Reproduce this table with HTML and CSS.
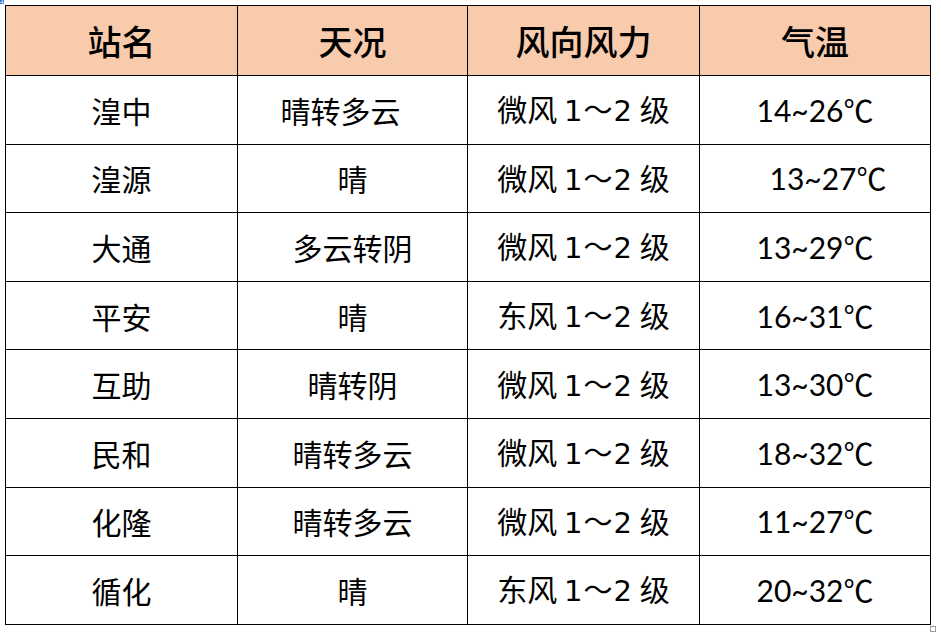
FILE: index.html
```html
<!DOCTYPE html>
<html lang="zh">
<head>
<meta charset="utf-8">
<title>天气预报</title>
<link rel="stylesheet" href="styles.css">
</head>
<body>
<div class="canvas">
  <span class="handle handle-tl"></span>
  <table class="weather">
    <colgroup><col class="c1"><col class="c2"><col class="c3"><col class="c4"></colgroup>
    <thead>
      <tr><th>站名</th><th>天况</th><th>风向风力</th><th>气温</th></tr>
    </thead>
    <tbody>
      <tr><td>湟中</td><td><span class="shift-l">晴转多云</span></td><td>微风 <span class="num">1～2</span> 级</td><td class="temp">14~26℃</td></tr>
      <tr><td>湟源</td><td>晴</td><td>微风 <span class="num">1～2</span> 级</td><td class="temp"><span class="shift-r">13~27℃</span></td></tr>
      <tr><td>大通</td><td>多云转阴</td><td>微风 <span class="num">1～2</span> 级</td><td class="temp">13~29℃</td></tr>
      <tr><td>平安</td><td>晴</td><td>东风 <span class="num">1～2</span> 级</td><td class="temp">16~31℃</td></tr>
      <tr><td>互助</td><td>晴转阴</td><td>微风 <span class="num">1～2</span> 级</td><td class="temp">13~30℃</td></tr>
      <tr><td>民和</td><td>晴转多云</td><td>微风 <span class="num">1～2</span> 级</td><td class="temp">18~32℃</td></tr>
      <tr><td>化隆</td><td>晴转多云</td><td>微风 <span class="num">1～2</span> 级</td><td class="temp">11~27℃</td></tr>
      <tr><td>循化</td><td>晴</td><td>东风 <span class="num">1～2</span> 级</td><td class="temp">20~32℃</td></tr>
    </tbody>
  </table>
  <span class="handle handle-br"></span>
</div>
</body>
</html>
```

FILE: styles.css
```css
html, body {
  margin: 0;
  padding: 0;
  background: #ffffff;
}

.canvas {
  position: relative;
  width: 941px;
  height: 632px;
  padding: 5px 0 0 5px;
  box-sizing: border-box;
}

.weather {
  border-collapse: collapse;
  table-layout: fixed;
  width: 925px;
  font-family: "Noto Sans CJK SC", "Noto Sans", sans-serif;
  color: #000;
}

.c1 { width: 232px; }
.c2 { width: 230px; }
.c3 { width: 232px; }
.c4 { width: 231px; }

.weather th,
.weather td {
  border: 1px solid #000;
  padding: 0;
  text-align: center;
  vertical-align: middle;
}

.weather th {
  background: #f8cbad;
  height: 69px;
  font-size: 34px;
  font-weight: 500;
  line-height: 1;
}

.weather td {
  height: 67.6px;
  font-size: 30px;
  font-weight: 400;
  line-height: 1;
}

.num {
  font-family: "DejaVu Sans", "Noto Sans CJK SC", sans-serif;
  font-size: 29px;
  letter-spacing: 1px;
}

.temp {
  font-family: "Lato", "Noto Sans CJK SC", sans-serif;
  font-size: 34px;
}

.shift-l { margin-right: 24px; }
.shift-r { margin-left: 26px; }

.handle {
  position: absolute;
  width: 4px;
  height: 4px;
  box-sizing: border-box;
}

.handle-tl {
  left: 0;
  top: 0;
  border: 1px dotted #3b78d8;
  background: #9cc2f0;
}

.handle-br {
  left: 930px;
  top: 626px;
  width: 6px;
  height: 6px;
  border: 1px solid #9a9a9a;
}
```
